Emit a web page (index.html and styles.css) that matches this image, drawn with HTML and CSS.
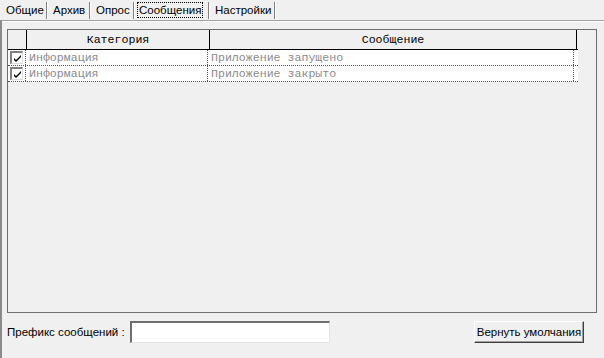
FILE: index.html
```html
<!DOCTYPE html>
<html>
<head>
<meta charset="utf-8">
<link rel="stylesheet" href="styles.css">
</head>
<body>
<div class="tabs">
  <div class="tab t1">Общие</div>
  <div class="tab t2">Архив</div>
  <div class="tab t3">Опрос</div>
  <div class="tab t4 active"><span class="focus">Сообщения</span></div>
  <div class="tab t5">Настройки</div>
</div>
<div class="panel">
  <div class="grid">
    <div class="row head">
      <div class="c0"></div>
      <div class="c1">Категория</div>
      <div class="c2">Сообщение</div>
    </div>
    <div class="row data">
      <div class="c0"><span class="chk"><svg width="9" height="9" viewBox="0 0 9 9"><path d="M1 4 L3 6 L8 1 L8 3 L3 8 L1 6 Z" fill="#000"/></svg></span></div>
      <div class="c1">Информация</div>
      <div class="c2">Приложение запущено</div>
    </div>
    <div class="row data">
      <div class="c0"><span class="chk"><svg width="9" height="9" viewBox="0 0 9 9"><path d="M1 4 L3 6 L8 1 L8 3 L3 8 L1 6 Z" fill="#000"/></svg></span></div>
      <div class="c1">Информация</div>
      <div class="c2">Приложение закрыто</div>
    </div>
  </div>
  <div class="bottom">
    <label class="lbl">Префикс сообщений :</label>
    <input class="inp" type="text">
    <button class="btn">Вернуть умолчания</button>
  </div>
</div>
</body>
</html>
```
FILE: styles.css
```css
html, body {
  margin: 0;
  padding: 0;
  background: #f0f0f0;
  font-family: "Liberation Sans", Arial, sans-serif;
  font-size: 11px;
  color: #000;
  width: 604px;
  height: 358px;
  overflow: hidden;
}
.tabs {
  display: flex;
  height: 20px;
  padding-left: 2px;
  align-items: flex-start;
}
.tab {
  height: 17px;
  margin-top: 2px;
  padding-left: 4px;
  line-height: 17px;
  font-size: 11.5px;
  border-right: 1px solid #808080;
  box-shadow: 1px 0 0 #fff;
  margin-right: 2px;
  box-sizing: border-box;
  white-space: nowrap;
}
.t1 { width: 45px; }
.t2 { width: 41px; }
.t3 { width: 42px; }
.t4 { width: 73px; padding-left: 2px; }
.t5 { width: 64px; }
.tab.active .focus {
  display: inline-block;
  line-height: 14px;
  height: 14px;
  outline: 1px dotted #000;
  padding: 0 1px;
}
.panel {
  border-left: 2px solid #8a8a8a;
  border-top: 1px solid #a0a0a0;
  box-shadow: inset 0 1px 0 #fff;
  height: 337px;
  padding: 8px 7px 0 5px;
}
.grid {
  width: 588px;
  height: 282px;
  border: 1px solid #6e6e6e;
  background: #f0f0f0;
}
.row {
  display: flex;
  width: 570px;
}
.head {
  height: 19px;
  border-bottom: 1px solid #000;
}
.head > div {
  border-right: 1px solid #000;
  text-align: center;
  font-family: "Liberation Mono", "Courier New", monospace;
  font-size: 11.6px;
  line-height: 20px;
}
.c0 { width: 18px; flex: none; }
.c1 { width: 182px; flex: none; }
.c2 { width: 366px; flex: none; }
.data {
  height: 15px;
  background: #fff;
  border-bottom: 1px dotted #555;
}
.data > div {
  border-right: 1px dotted #555;
  font-family: "Liberation Mono", "Courier New", monospace;
  font-size: 11.6px;
  color: #8c8c8c;
  line-height: 16px;
  padding-left: 3px;
  box-sizing: border-box;
  white-space: nowrap;
}
.data > .c0 {
  padding-left: 2px;
}
.chk {
  display: block;
  width: 13px;
  height: 13px;
  margin-top: 1px;
  box-sizing: border-box;
  border-top: 2px solid #808080;
  border-left: 2px solid #808080;
  border-right: 1px solid #dcdcdc;
  border-bottom: 1px solid #dcdcdc;
  background: #fff;
}
.chk svg { display: block; margin: 1px 0 0 1px; }
.bottom {
  display: flex;
  align-items: center;
  margin-top: 8px;
  height: 22px;
}
.lbl {
  width: 123px;
  font-size: 11.5px;
  white-space: nowrap;
}
.inp {
  width: 200px;
  height: 22px;
  box-sizing: border-box;
  border-top: 2px solid #6e6e6e;
  border-left: 2px solid #6e6e6e;
  border-right: 1px solid #e3e3e3;
  border-bottom: 1px solid #e3e3e3;
  background: #fff;
  margin: 0;
  padding: 0;
}
.btn {
  margin-left: 144px;
  width: 110px;
  height: 22px;
  box-sizing: border-box;
  font-family: "Liberation Sans", Arial, sans-serif;
  font-size: 11.5px;
  white-space: nowrap;
  background: #f0f0f0;
  border: 1px solid;
  border-color: #fff #404040 #404040 #fff;
  box-shadow: inset -1px -1px 0 #a0a0a0;
  padding: 0;
  color: #000;
}
```
